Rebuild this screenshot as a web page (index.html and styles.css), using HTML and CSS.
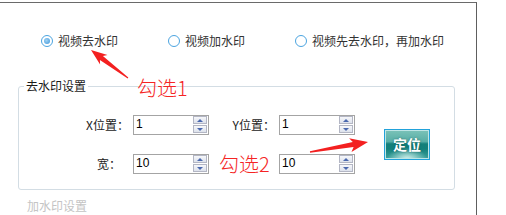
FILE: index.html
```html
<!DOCTYPE html>
<html lang="zh-CN">
<head>
    <meta charset="UTF-8">
    <title>视频水印</title>
    <link rel="stylesheet" href="styles.css">
</head>
<body>

    <div class="frame">
        <!-- Mode radios -->
        <div class="radios">
            <label class="radio checked"><span class="dot"></span>视频去水印</label>
            <label class="radio"><span class="dot"></span>视频加水印</label>
            <label class="radio"><span class="dot"></span>视频先去水印，再加水印</label>
        </div>

        <!-- Remove watermark settings -->
        <fieldset class="group">
            <legend>去水印设置</legend>
            <div class="grid">
                <span class="lbl">X位置<span class="p">：</span></span>
                <div class="spin"><span class="val">1</span><span class="arrows"><i class="up"></i><i class="down"></i></span></div>
                <span class="lbl">Y位置<span class="p">：</span></span>
                <div class="spin"><span class="val">1</span><span class="arrows"><i class="up"></i><i class="down"></i></span></div>
                <button class="locate">定位</button>

                <span class="lbl lbl-short">宽<span class="p">：</span></span>
                <div class="spin"><span class="val">10</span><span class="arrows"><i class="up"></i><i class="down"></i></span></div>
                <span class="lbl"></span>
                <div class="spin"><span class="val">10</span><span class="arrows"><i class="up"></i><i class="down"></i></span></div>
            </div>
        </fieldset>

        <div class="next-group">加水印设置</div>

        <!-- Annotations drawn over the screenshot -->
        <svg class="marks" width="506" height="215" viewBox="0 0 506 215">
            <polygon points="91,50 107.5,55 102.9,55.9 128.3,77.6 127.7,78.4 99.9,59.9 100.1,64.6" fill="#f32020"/>
            <polygon points="368,142 349.1,138.2 352.8,142.1 309.9,151.3 310.1,152.7 353.6,147.1 351.5,152" fill="#f32020"/>
        </svg>
        <span class="note note-1">勾选1</span>
        <span class="note note-2">勾选2</span>
    </div>

</body>
</html>
```

FILE: styles.css
```css
body {
    margin: 0;
    background-color: #ffffff;
    font-family: "Noto Sans CJK SC", "Noto Sans", sans-serif;
    font-size: 12px;
    color: #222;
}
.frame {
    position: relative;
    box-sizing: border-box;
    width: 477px;
    height: 213px;
    margin-top: 2px;
    border-top: 1px solid #6a6a6a;
    border-right: 1px solid #5e5e5e;
}
/* centred colon, as on the Windows dialog */
.p {
    font-family: "Noto Sans CJK TC", "Noto Sans CJK SC", sans-serif;
}

/* Radio row */
.radios {
    display: flex;
    align-items: center;
    height: 16px;
    padding-top: 30px;
    padding-left: 41px;
}
.radio {
    display: flex;
    flex-shrink: 0;
    align-items: center;
    gap: 5px;
    white-space: nowrap;
    color: #333;
    line-height: 16px;
    margin-right: 50px;
}
.radio:last-child {
    margin-right: 0;
}
.dot {
    box-sizing: border-box;
    width: 12px;
    height: 12px;
    border: 1px solid #4ba4e0;
    border-radius: 50%;
    background: #fff;
    display: flex;
    align-items: center;
    justify-content: center;
}
.checked .dot::after {
    content: '';
    width: 6px;
    height: 6px;
    border-radius: 50%;
    background: radial-gradient(circle at 40% 40%, #9fd2f4, #3d95d8);
}

/* Group box */
.group {
    box-sizing: border-box;
    width: 437px;
    margin: 29px 0 0 18px;
    padding: 0 0 15px 0;
    border: 1px solid #d3dde4;
    border-radius: 3px;
}
.group legend {
    margin-left: 5px;
    padding: 0 2px;
    line-height: 16px;
    color: #1a1a1a;
}
.grid {
    display: grid;
    grid-template-columns: 110px 76px 62px 76px auto;
    grid-template-rows: 20px 20px;
    column-gap: 4px;
    row-gap: 19px;
    margin-top: 21px;
    align-items: center;
}
.lbl {
    text-align: right;
    white-space: nowrap;
    color: #222;
    line-height: 16px;
}
.lbl-short {
    padding-right: 8px;
}

/* Spin boxes */
.spin {
    box-sizing: border-box;
    height: 20px;
    border: 1px solid #a4a4a4;
    background: #fff;
    display: flex;
    justify-content: space-between;
    padding: 0 0 0 2px;
}
.val {
    font-family: "Liberation Sans", Arial, sans-serif;
    font-size: 12px;
    line-height: 16px;
    color: #000;
}
.arrows {
    display: flex;
    flex-direction: column;
    gap: 1px;
    padding: 0 1px 1px 0;
}
.arrows i {
    box-sizing: border-box;
    width: 14px;
    height: 8px;
    border: 1px solid #b3b6c4;
    background: linear-gradient(#f6f7fa, #dde2ec);
    display: flex;
    align-items: center;
    justify-content: center;
}
.arrows i::after {
    content: '';
    border-left: 3px solid transparent;
    border-right: 3px solid transparent;
}
.arrows .up::after {
    border-bottom: 3px solid #4a68ae;
}
.arrows .down::after {
    border-top: 3px solid #4a68ae;
}

/* Locate button */
.locate {
    grid-column: 5;
    grid-row: 1 / span 2;
    align-self: center;
    justify-self: start;
    margin-left: 25px;
    margin-top: -1px;
    width: 46px;
    height: 31px;
    padding: 0;
    border: 1px solid #22a2da;
    box-shadow: inset 0 0 0 1px #bfe6e6;
    background:
        radial-gradient(ellipse 45% 40% at 50% 100%, rgba(235, 255, 250, 0.85), transparent),
        linear-gradient(#7cc3b9 0%, #57aea6 40%, #137f7a 48%, #12807b 65%, #3ea39d 100%);
    color: #fff;
    font-family: "Noto Sans CJK SC", sans-serif;
    font-size: 14px;
    font-weight: bold;
    text-shadow: 0 0 2px rgba(0, 60, 60, 0.6);
}

.next-group {
    margin: 9px 0 0 27px;
    color: #c4c4c4;
    line-height: 14px;
}

/* Annotation overlay */
.marks {
    position: absolute;
    left: 0;
    top: -3px;
    pointer-events: none;
}
.note {
    position: absolute;
    color: #f52424;
    font-size: 20px;
    line-height: 22px;
    font-weight: 300;
}
.note-1 {
    left: 137px;
    top: 74px;
}
.note-2 {
    left: 219px;
    top: 150px;
}
```
